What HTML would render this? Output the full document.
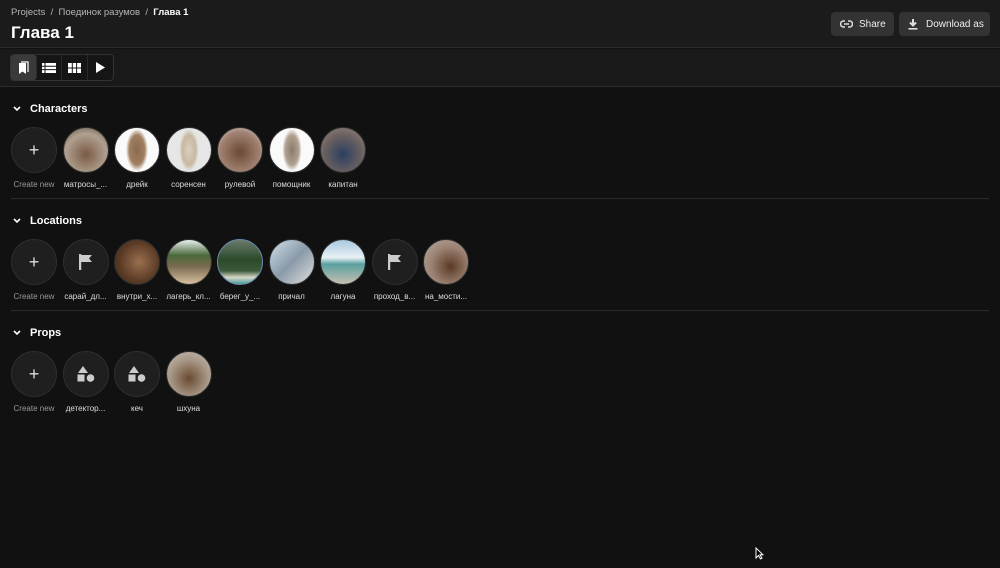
<!DOCTYPE html><html><head><meta charset="utf-8"><style>
*{box-sizing:border-box;margin:0;padding:0}
body{width:1000px;height:568px;background:#111111;font-family:"Liberation Sans",Arial,sans-serif;color:#fff;position:relative;overflow:hidden}
.hdr{position:absolute;left:0;top:0;width:1000px;height:48px;background:#1b1b1b;border-bottom:1px solid #2c2c2c}
.bc{position:absolute;left:11px;top:7px;font-size:9.5px;color:#b5b5b5}
.bc b{color:#fff;font-weight:bold}
.title{position:absolute;left:11px;top:23px;font-size:17px;font-weight:bold}
.btn{position:absolute;top:12px;height:24px;background:#333;border-radius:4px;font-size:10px;color:#eee;display:flex;align-items:center;padding-left:9px}
.tb{position:absolute;left:0;top:49px;width:1000px;height:38px;background:#191919;border-bottom:1px solid #2c2c2c}
.seg{position:absolute;left:10px;top:5px;width:104px;height:27px;border:1px solid #333;border-radius:4px;display:flex;background:#151515}
.seg div{width:26px;height:25px;display:flex;align-items:center;justify-content:center;border-right:1px solid #2a2a2a}
.seg div.on{background:#3a3a3a;border-radius:3px}
.sh{position:absolute;left:13px;font-size:11px;font-weight:bold;display:flex;align-items:center;gap:9px}
.row{position:absolute;left:11px;display:flex;gap:5.5px}
.it{width:46px;display:flex;flex-direction:column;align-items:center}
.c{width:46px;height:46px;border-radius:50%;background:#1f1f1f;border:1px solid #2e2e2e;display:flex;align-items:center;justify-content:center;color:#ddd;font-size:18px}
.l{font-size:8px;color:#ddd;margin-top:7px;white-space:nowrap;width:54px;text-align:center;overflow:hidden}
.l.g{color:#999}
.sep{position:absolute;left:11px;width:978px;height:1px;background:#2a2a2a}
</style></head><body>
<div class="hdr">
<div class="bc">Projects &nbsp;/&nbsp; Поединок разумов &nbsp;/&nbsp; <b>Глава 1</b></div>
<div class="title">Глава 1</div>
<div class="btn" style="left:831px;width:63px"><svg width="13" height="10" viewBox="0 0 13 10" style="margin-right:6px"><path d="M5 2H3.5a3 3 0 000 6H5M8 2h1.5a3 3 0 010 6H8M4 5h5" stroke="#ddd" stroke-width="1.5" fill="none"/></svg>Share</div>
<div class="btn" style="left:899px;width:91px"><svg width="10" height="11" viewBox="0 0 10 11" style="margin-right:8px"><path d="M5 0v6M2 3.5L5 6.5 8 3.5" stroke="#ddd" stroke-width="2" fill="none"/><rect x="0.5" y="9" width="9" height="1.6" fill="#ddd"/></svg>Download as</div>
</div>
<div class="tb"><div class="seg">
<div class="on"><svg width="14" height="14" viewBox="0 0 14 14"><path d="M3 2h7v11l-3.5-2.5L3 13z" fill="#fff"/><path d="M5 1h7v10" stroke="#fff" stroke-width="1.2" fill="none"/></svg></div>
<div><svg width="14" height="10"><rect width="14" height="10" fill="#fff"/><path d="M0 3.3h14M0 6.6h14M3 0v10" stroke="#151515" stroke-width="1"/></svg></div>
<div><svg width="13" height="10"><rect width="13" height="10" fill="#fff"/><path d="M0 5h13M4.3 0v10M8.6 0v10" stroke="#151515" stroke-width="1"/></svg></div>
<div style="border:none"><svg width="10" height="11"><path d="M1 0l9 5.5L1 11z" fill="#fff"/></svg></div>
</div></div>

<div class="sh" style="top:103px"><svg width="8" height="6"><path d="M1 1l3 3 3-3" stroke="#fff" stroke-width="1.6" fill="none"/></svg>Characters</div>
<div class="row" style="top:127px">
<div class="it"><div class="c">+</div><div class="l g">Create new</div></div>
<div class="it"><div class="c" style="background:radial-gradient(circle at 50% 60%,#7a5a45,#b0a090 60%,#5a4a3a)"></div><div class="l">матросы_...</div></div>
<div class="it"><div class="c" style="background:radial-gradient(ellipse 25% 48% at 50% 50%,#8a6a50,#a08060 70%,#fafafa 100%)"></div><div class="l">дрейк</div></div>
<div class="it"><div class="c" style="background:radial-gradient(ellipse 22% 48% at 50% 50%,#d8d0c0,#c8b8a0 70%,#e6e6e6 100%)"></div><div class="l">соренсен</div></div>
<div class="it"><div class="c" style="background:radial-gradient(circle at 50% 55%,#6a4a35,#a08070 60%,#ddd)"></div><div class="l">рулевой</div></div>
<div class="it"><div class="c" style="background:radial-gradient(ellipse 22% 48% at 50% 50%,#8a7a6a,#b0a090 70%,#fafafa 100%)"></div><div class="l">помощник</div></div>
<div class="it"><div class="c" style="background:radial-gradient(circle at 50% 60%,#2a4060,#6a6060 55%,#9a8a80)"></div><div class="l">капитан</div></div>
</div>
<div class="sep" style="top:198px"></div>

<div class="sh" style="top:215px"><svg width="8" height="6"><path d="M1 1l3 3 3-3" stroke="#fff" stroke-width="1.6" fill="none"/></svg>Locations</div>
<div class="row" style="top:239px">
<div class="it"><div class="c">+</div><div class="l g">Create new</div></div>
<div class="it"><div class="c"><svg width="14" height="16"><path d="M1 0v16" stroke="#ccc" stroke-width="2.5"/><path d="M2 1h11l-3 3.5 3 3.5H2z" fill="#ccc"/></svg></div><div class="l">сарай_дл...</div></div>
<div class="it"><div class="c" style="background:radial-gradient(circle at 55% 50%,#9a7050,#5a3a25 60%,#3a2a1a)"></div><div class="l">внутри_х...</div></div>
<div class="it"><div class="c" style="background:linear-gradient(#e8f0f0 0,#4a6a3a 35%,#7a6a50 60%,#d8c0a0)"></div><div class="l">лагерь_кл...</div></div>
<div class="it"><div class="c" style="border-color:#6a8aaa;background:linear-gradient(#6a7a6a,#2a4a2a 45%,#3a5a3a 70%,#d8d8c8 85%,#4a9a9a)"></div><div class="l">берег_у_...</div></div>
<div class="it"><div class="c" style="background:linear-gradient(135deg,#cfe0ea,#8a9aa8 50%,#e0e0e0)"></div><div class="l">причал</div></div>
<div class="it"><div class="c" style="background:linear-gradient(#aac8e0,#e8f0f4 40%,#5aa0a0 55%,#c8c0b0)"></div><div class="l">лагуна</div></div>
<div class="it"><div class="c"><svg width="14" height="16"><path d="M1 0v16" stroke="#ccc" stroke-width="2.5"/><path d="M2 1h11l-3 3.5 3 3.5H2z" fill="#ccc"/></svg></div><div class="l">проход_в...</div></div>
<div class="it"><div class="c" style="background:radial-gradient(circle at 60% 60%,#5a3a25,#9a8070 50%,#b8b0a8)"></div><div class="l">на_мости...</div></div>
</div>
<div class="sep" style="top:310px"></div>

<div class="sh" style="top:327px"><svg width="8" height="6"><path d="M1 1l3 3 3-3" stroke="#fff" stroke-width="1.6" fill="none"/></svg>Props</div>
<div class="row" style="top:351px">
<div class="it"><div class="c">+</div><div class="l g">Create new</div></div>
<div class="it"><div class="c"><svg width="18" height="16"><path d="M6 0l5 7H1z" fill="#ccc"/><rect x="0.5" y="8.5" width="7" height="7" fill="#ccc"/><circle cx="13.5" cy="12" r="3.8" fill="#ccc"/></svg></div><div class="l">детектор...</div></div>
<div class="it"><div class="c"><svg width="18" height="16"><path d="M6 0l5 7H1z" fill="#ccc"/><rect x="0.5" y="8.5" width="7" height="7" fill="#ccc"/><circle cx="13.5" cy="12" r="3.8" fill="#ccc"/></svg></div><div class="l">кеч</div></div>
<div class="it"><div class="c" style="background:radial-gradient(circle at 50% 60%,#6a4a30,#a89888 55%,#c8c0b8)"></div><div class="l">шхуна</div></div>
</div>
<svg style="position:absolute;left:755px;top:547px" width="9" height="13"><path d="M1 1v10l2.5-2.5 2 3.5 1.5-.8-2-3.4H8z" fill="#000" stroke="#fff" stroke-width="1"/></svg>
</body></html>
